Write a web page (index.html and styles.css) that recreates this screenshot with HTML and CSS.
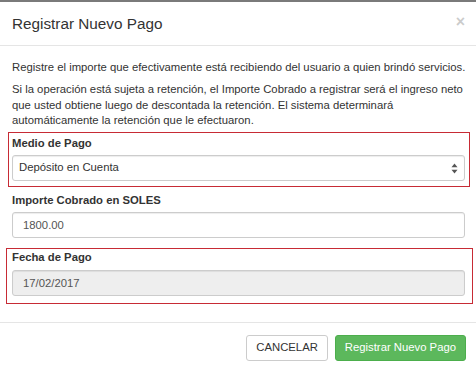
FILE: index.html
```html
<!DOCTYPE html>
<html lang="es">
<head>
    <meta charset="UTF-8">
    <meta name="viewport" content="width=device-width, initial-scale=1.0">
    <title>Registrar Nuevo Pago</title>
    <link rel="stylesheet" href="styles.css">
</head>
<body>

    <div class="backdrop-strip"></div>

    <div class="modal">
        <div class="modal-header">
            <h4 class="modal-title">Registrar Nuevo Pago</h4>
            <button class="close" type="button">&times;</button>
        </div>

        <div class="modal-body">
            <p>Registre el importe que efectivamente está recibiendo del usuario a quien brindó servicios.</p>
            <p>Si la operación está sujeta a retención, el Importe Cobrado a registrar será el ingreso neto que usted obtiene luego de descontada la retención. El sistema determinará automáticamente la retención que le efectuaron.</p>

            <div class="form-group marked marked-first">
                <label for="medioPago">Medio de Pago</label>
                <div class="select-wrap">
                    <select id="medioPago" class="form-control">
                        <option>Depósito en Cuenta</option>
                        <option>Efectivo</option>
                        <option>Cheque</option>
                    </select>
                    <svg class="select-arrows" width="7" height="11" viewBox="0 0 7 11">
                        <path d="M3.5 0.5 L6.5 4.2 L0.5 4.2 Z" fill="#555"/>
                        <path d="M3.5 10.5 L6.5 6.8 L0.5 6.8 Z" fill="#555"/>
                    </svg>
                </div>
            </div>

            <div class="form-group">
                <label for="importe">Importe Cobrado en SOLES</label>
                <input id="importe" class="form-control" type="text" value="1800.00">
            </div>

            <div class="form-group marked marked-second">
                <label for="fecha">Fecha de Pago</label>
                <input id="fecha" class="form-control" type="text" value="17/02/2017" readonly>
            </div>
        </div>

        <div class="modal-footer">
            <button class="btn btn-default" type="button">CANCELAR</button>
            <button class="btn btn-success" type="button">Registrar Nuevo Pago</button>
        </div>
    </div>

</body>
</html>
```

FILE: styles.css
```css
body {
    font-family: "Liberation Sans", Arial, sans-serif;
    font-size: 11.3px;
    line-height: 15.4px;
    color: #333;
    background-color: #fff;
    margin: 0;
    padding: 0;
}

.backdrop-strip {
    height: 2px;
    background-color: #7a7a7a;
}

.modal {
    background-color: #fff;
}

.modal-header {
    display: flex;
    align-items: center;
    justify-content: space-between;
    padding: 12px 7px 11px 12px;
    border-bottom: 1px solid #e5e5e5;
}

.modal-title {
    margin: 0;
    font-size: 15.3px;
    font-weight: normal;
    line-height: 20px;
}

.close {
    background: none;
    border: none;
    padding: 0 4px;
    margin-top: -4px;
    font-family: "Liberation Sans", Arial, sans-serif;
    font-size: 16px;
    font-weight: bold;
    line-height: 1;
    color: #000;
    opacity: 0.2;
    cursor: pointer;
}

.modal-body {
    padding: 14px 11px 14px 12px;
}

.modal-body p {
    margin: 0 -8px 7px 0;
}

.form-group {
    position: relative;
    margin-bottom: 12px;
}

.form-group label {
    display: block;
    font-weight: bold;
    margin-bottom: 4px;
}

/* red annotation frames around some fields */
.marked::after {
    content: "";
    position: absolute;
    border: 1px solid #c72b35;
    pointer-events: none;
}

.marked-first::after {
    top: -4px;
    left: -4px;
    right: -5px;
    bottom: -6px;
}

.marked-second::after {
    top: -2px;
    left: -6px;
    right: -8px;
    bottom: -8px;
}

.form-control {
    display: block;
    width: 100%;
    height: 26px;
    box-sizing: border-box;
    padding: 4px 10px;
    font-family: "Liberation Sans", Arial, sans-serif;
    font-size: 11.3px;
    line-height: 15.4px;
    color: #555;
    background-color: #fff;
    border: 1px solid #ccc;
    border-radius: 3px;
    box-shadow: inset 0 1px 1px rgba(0, 0, 0, 0.075);
}

.form-control[readonly] {
    background-color: #eee;
}

.select-wrap {
    position: relative;
}

.select-wrap select {
    appearance: none;
    -webkit-appearance: none;
    padding-left: 6px;
    background-color: #fff;
    color: #333;
}

.select-arrows {
    position: absolute;
    right: 7px;
    top: 8px;
}

.modal-footer {
    display: flex;
    justify-content: flex-end;
    gap: 7px;
    padding: 12px 10px 12px 12px;
    border-top: 1px solid #e5e5e5;
}

.btn {
    height: 26px;
    box-sizing: border-box;
    padding: 4px 9px;
    font-family: "Liberation Sans", Arial, sans-serif;
    font-size: 11.3px;
    line-height: 15.4px;
    border: 1px solid transparent;
    border-radius: 3px;
    cursor: pointer;
}

.btn-default {
    color: #333;
    background-color: #fff;
    border-color: #ccc;
}

.btn-success {
    color: #fff;
    background-color: #5cb85c;
    border-color: #4cae4c;
}
```
